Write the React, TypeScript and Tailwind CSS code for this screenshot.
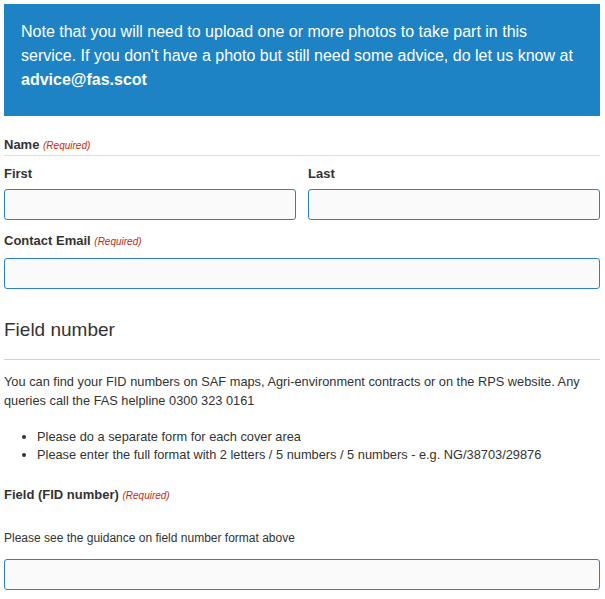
export default function App() {
  return (
    <div className="min-h-screen bg-white pt-[4px] pl-[4px] pr-[5px] font-['Liberation_Sans',Arial,sans-serif] text-[#333]">
      <div className="bg-[#1d83c5] pt-4 pb-6 px-[17px] text-[16px] leading-[24px] text-white">
        Note that you will need to upload one or more photos to take part in this service. If you don't have a photo but
        still need some advice, do let us know at <strong className="font-bold">advice@fas.scot</strong>
      </div>

      <div className="mt-[19px]">
        <div className="border-b border-[#dedede] text-[13px] font-bold leading-[19px]">
          Name <span className="text-[10px] font-normal italic text-[#c02b0a]">(Required)</span>
        </div>
        <div className="mt-[8px] grid grid-cols-2 gap-x-[12px]">
          <div>
            <label className="block text-[13px] font-bold leading-[20px]">First</label>
            <input className="mt-[5px] block h-[31px] w-full rounded-[3px] border border-[#2f7fc1] bg-[#fafafa]" />
          </div>
          <div>
            <label className="block text-[13px] font-bold leading-[20px]">Last</label>
            <input className="mt-[5px] block h-[31px] w-full rounded-[3px] border border-[#2f7fc1] bg-[#fafafa]" />
          </div>
        </div>
      </div>

      <div className="mt-[11px]">
        <label className="block text-[13px] font-bold leading-[20px]">
          Contact Email <span className="text-[10px] font-normal italic text-[#c02b0a]">(Required)</span>
        </label>
        <input className="mt-[6px] block h-[31px] w-full rounded-[3px] border border-[#2f7fc1] bg-[#fafafa]" />
      </div>

      <h2 className="mt-[27px] border-b border-[#d0d0d0] pb-[15px] text-[19px] font-normal leading-[28px]">Field number</h2>

      <p className="mt-[12px] text-[12.8px] leading-[19px]">
        You can find your FID numbers on SAF maps, Agri-environment contracts or on the RPS website. Any queries call the
        FAS helpline 0300 323 0161
      </p>
      <ul className="mt-[18px] list-disc pl-[33px] text-[12.8px] leading-[18px]">
        <li>Please do a separate form for each cover area</li>
        <li>Please enter the full format with 2 letters / 5 numbers / 5 numbers - e.g. NG/38703/29876</li>
      </ul>

      <div className="mt-[21px]">
        <label className="block text-[13px] font-bold leading-[20px]">
          Field (FID number) <span className="text-[10px] font-normal italic text-[#c02b0a]">(Required)</span>
        </label>
        <p className="mt-[23px] text-[12px] leading-[18px]">Please see the guidance on field number format above</p>
        <input className="mt-[12px] block h-[31px] w-full rounded-[3px] border border-[#2f7fc1] bg-[#fafafa]" />
      </div>
    </div>
  );
}
